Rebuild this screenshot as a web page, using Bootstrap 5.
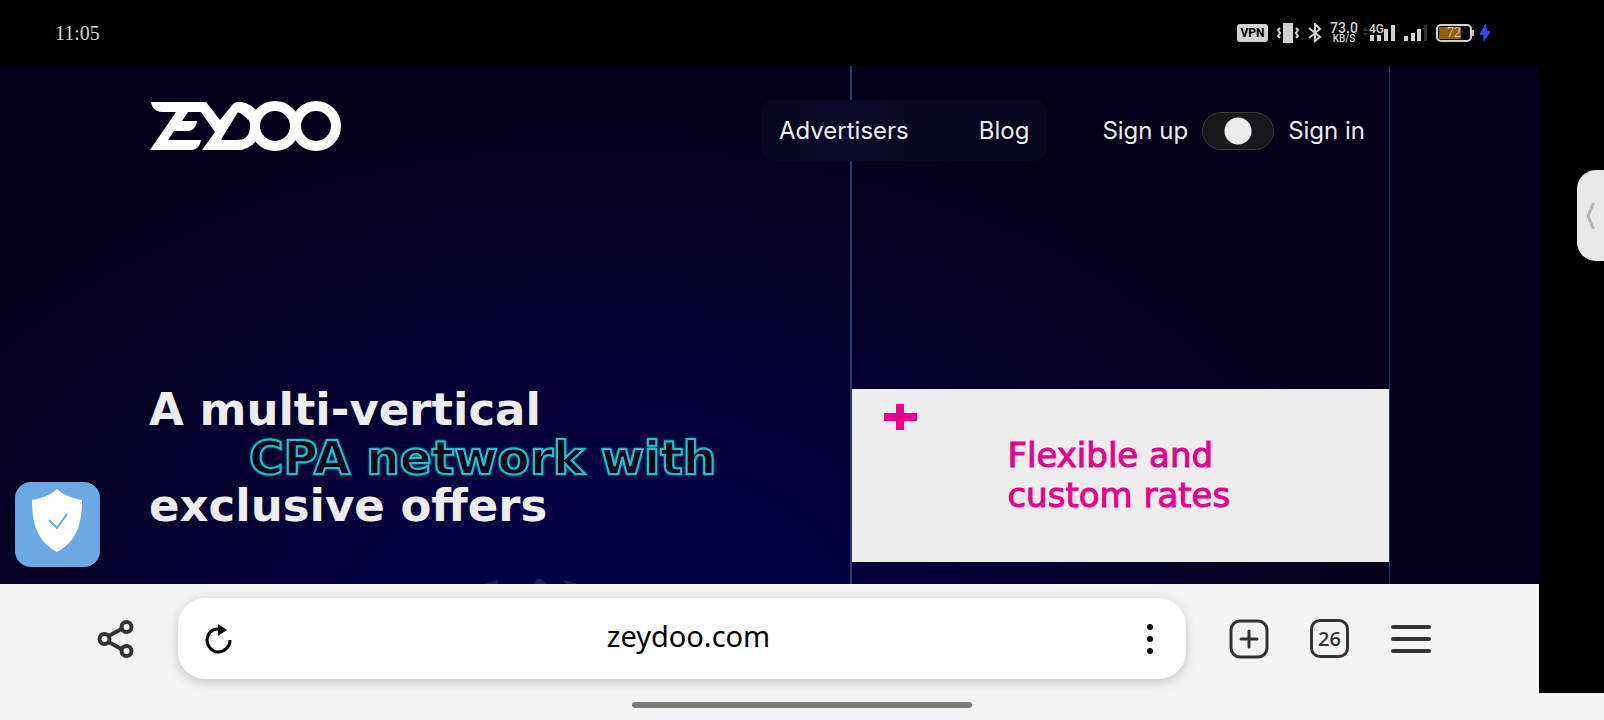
<!DOCTYPE html>
<html lang="en">
<head>
<meta charset="utf-8">
<meta name="viewport" content="width=device-width, initial-scale=1">
<title>zeydoo.com</title>
<link rel="stylesheet" href="https://cdn.jsdelivr.net/npm/bootstrap@5.3.0/dist/css/bootstrap.min.css">
<style>
body{background:#f4f4f4;font-family:Inter,"Open Sans",sans-serif;color:#ededed}
svg{display:block;flex:none}
button{border:0;background:none;padding:0}
.status{height:66px;background:#000;padding:0 114px 0 55px;color:#d2d2d2}
.clock{font:20px "Liberation Serif",serif}
.vpn{background:#d2d2d2;color:#000;font:bold 12px/18px Roboto,sans-serif;width:31px;border-radius:3px;text-align:center}
.rate{font:500 14px/11px Roboto,sans-serif;width:28px;text-align:center}
.rate small{font-size:10px;line-height:9px;display:block}
.cell{position:relative}
.cell span{position:absolute;left:0;top:-1px;font:500 12px/12px Roboto,sans-serif;background:#000}
.batt{width:36px;height:18px;border:2px solid #d2d2d2;border-radius:5px;position:relative;font:14px/14px "Liberation Serif",serif;text-align:center;background:linear-gradient(#8d620c,#8d620c) 1px 1px/22px 12px no-repeat;color:#e5cf9d}
.batt::after{content:"";position:absolute;right:-4px;top:4px;width:2px;height:6px;background:#bbb}
.edge{width:65px;background:#000;position:relative}
.handle{position:absolute;right:0;top:104px;width:27px;height:91px;border-radius:19px 0 0 19px;background:#e8e8e8}
.handle svg{margin-left:8px}
.hero{display:grid;grid-template:118px 1fr/13fr 10fr;padding:0 149px;position:relative;overflow:hidden;
background:radial-gradient(ellipse 820px 540px at 39% 108%,#05004c 0,#05003f 30%,#050028 62%,rgba(4,0,24,0) 100%),#040018}
.rails{grid-area:1/2/3/3;border-left:2px solid #2c3866;border-right:1px solid #2a3560;padding-bottom:22px}
.top{grid-area:1/1/2/3;z-index:1;padding:11px 25px 0 1px;font-size:24px}
.top a{color:#ededed;text-decoration:none;line-height:61px}
.top .logo{padding-bottom:10px}
.pill{background:radial-gradient(ellipse 60px 90px at 91px 30px,#0d0b28,#090620);border-radius:14px;padding:0 18px;gap:70px}
.account{margin-left:55px;gap:14px}
.flip{appearance:none;width:72px;height:38px;border:1px solid #39393e;border-radius:19px;margin:0;background:radial-gradient(circle at 50% 50%,#ededed 13px,#18181b 14px)}
.headline{grid-area:2/1/3/2;margin:0 0 54px;align-self:end;font:700 45px/48px "DejaVu Sans",sans-serif;white-space:nowrap}
.headline em{display:block;font:700 47px/48px "DejaVu Sans",sans-serif;color:#04001a;-webkit-text-stroke:2px #1fc0cf;margin-left:100px;filter:drop-shadow(0 0 1px #1a9fb0)}
.offer{background:#ededed;height:173px;color:#e6008a;position:relative;padding:46px 0 0 155px;font:400 34px/40px "DejaVu Sans",sans-serif;-webkit-text-stroke:1px #e6008a}
.offer svg{position:absolute;left:32px;top:15px}
.guard{position:absolute;left:15px;bottom:17px;width:85px;height:85px;border-radius:16px;background:#6aa9e4;padding:0 17px 9px}
.gear{position:absolute;left:484px;bottom:0}
.tools{height:109px;padding:0 108px 0 97px;color:#333}
.address{height:81px;border-radius:27px;background:#fff;box-shadow:0 3px 12px rgba(0,0,0,.2);margin:0 43px 0 44px;padding:0 33px 0 26px}
.address input{border:0;outline:0;background:none;min-width:0;font:29px "Noto Sans",sans-serif;color:#000;text-align:center;padding:0 2px 6px 0}
.tabs{width:39px;height:39px;border:3px solid #333;border-radius:10px;font:600 20px/32px "Open Sans",sans-serif;color:#333;margin:0 42px 0 41px}
.gesture{height:27px;padding-bottom:3px}
.gesture div{width:340px;height:6px;border-radius:3px;background:#7b7b78}
</style>
</head>
<body class="d-flex flex-column min-vh-100">
<header class="status d-flex align-items-center">
  <time class="clock me-auto">11:05</time>
  <span class="vpn">VPN</span>
  <svg class="ms-2" width="24" height="20" viewBox="0 0 24 20"><path d="M7 0h10v20H7z" fill="#d2d2d2"/><path d="M4 5 2 7l2 3-2 3 2 2M20 5l2 2-2 3 2 3-2 2" fill="none" stroke="#d2d2d2" stroke-width="2"/></svg>
  <svg class="ms-2" width="14" height="20" viewBox="0 0 14 20"><path d="m1 5 11 9-5 4V1l5 5-11 9" fill="none" stroke="#d2d2d2" stroke-width="2"/></svg>
  <span class="rate ms-2">73.0<small>KB/S</small></span>
  <svg class="ms-1" width="7" height="14" viewBox="0 0 7 14"><path d="m1 5 2-4 3 4zM1 7l2 3 3-3z" fill="#333"/></svg>
  <span class="cell"><svg width="27" height="18" viewBox="0 0 27 18"><path d="M1 11h4v6H1zM8 9h4v8H8zM15 5h4v12h-4zM22 1h4v16h-4z" fill="#d2d2d2"/></svg><span>4G</span></span>
  <svg class="ms-2" width="24" height="18" viewBox="0 0 24 18"><path d="M0 12h4v5H0zM7 9h4v8H7zM13 5h4v12h-4z" fill="#d2d2d2"/><path d="M20 1h3v16h-3z" fill="#333"/></svg>
  <span class="batt ms-2">72</span>
  <svg class="ms-2" width="10" height="20" viewBox="1 0 10 20"><path d="M7 0 0 12h4l1 7 7-11H8z" fill="#2f45ee"/></svg>
</header>
<div class="d-flex flex-grow-1">
  <div class="d-flex flex-column flex-grow-1">
    <main class="hero flex-grow-1">
      <nav class="top d-flex align-items-center">
        <a href="#" class="logo me-auto" aria-label="Zeydoo"><svg width="192" height="50" viewBox="0 0 192 50"><g fill="#fff"><path d="M1 1h55l14 18L83 3c2-2 5-2 8-2 7 1 11 4 15 8l-8 10c-3-4-7-7-10-8L72 37c-1 2-1 2 1 2h17l4 9-8 1H52L65 31 51 11H38l-6 9h15c-1 6-4 10-9 10H24l-6 9h33c-1 6-4 10-10 10H0l26-38H12C6 11 2 7 1 1z"/></g><g fill="none" stroke="#fff" stroke-width="10"><circle cx="125" cy="25" r="20"/><circle cx="166" cy="25" r="20"/><path d="M86 6c12 1 19 9 19 19 0 12-7 19-18 19"/></g></svg></a>
        <div class="pill d-flex"><a href="#">Advertisers</a><a href="#">Blog</a></div>
        <div class="account d-flex align-items-center"><a href="#">Sign up</a><input class="flip" type="checkbox" role="switch" aria-label="Sign up or sign in"><a href="#">Sign in</a></div>
      </nav>
      <h1 class="headline">A multi-vertical<em>CPA network with</em>exclusive offers</h1>
      <section class="rails d-flex flex-column justify-content-end">
        <div class="offer"><svg width="34" height="26" viewBox="0 0 34 26"><path d="M12 0h8v9h13v8H20v9h-8v-9H0V9h12z" fill="#eb008b"/></svg>Flexible and<br>custom rates</div>
      </section>
      <svg class="gear" width="100" height="5" viewBox="0 0 100 5"><path d="M0 5 14 1v4zM50 5l3-5h5l4 5zM79 1l15 4H82z" fill="#fff" opacity=".12"/></svg>
      <button class="guard" aria-label="Protection"><svg width="50" height="63" viewBox="0 0 50 63"><path d="M25 0c6 6 15 9 25 11 0 27-7 42-25 52C7 53 0 38 0 11 10 9 19 6 25 0z" fill="#fff"/><path d="m17 31 8 8 10-14" fill="none" stroke="#6aa9e4" stroke-width="2"/></svg></button>
    </main>
    <div class="tools d-flex align-items-center">
      <button aria-label="Share"><svg width="37" height="38" viewBox="0 0 36 38" fill="none" stroke="#333" stroke-width="4"><circle cx="7" cy="19" r="5"/><circle cx="29" cy="7" r="5"/><circle cx="29" cy="31" r="5"/><path d="m11 16 13-7M11 22l13 7"/></svg></button>
      <div class="address d-flex align-items-center flex-grow-1">
        <button aria-label="Reload"><svg width="28" height="30" viewBox="0 0 28 30"><path d="M15 5C8 4 3 10 3 16s5 12 11 12 12-5 12-12" fill="none" stroke="#000" stroke-width="3"/><path d="m14 0 9 6-9 6z"/></svg></button>
        <input class="flex-grow-1" type="text" value="zeydoo.com" aria-label="Address">
        <button aria-label="Page options"><svg width="6" height="30" viewBox="0 0 6 30"><circle cx="3" cy="3" r="3"/><circle cx="3" cy="15" r="3"/><circle cx="3" cy="27" r="3"/></svg></button>
      </div>
      <button aria-label="New tab"><svg width="40" height="40" viewBox="0 0 40 40" fill="none" stroke="#333" stroke-width="3"><rect x="2" y="2" width="36" height="36" rx="9"/><path d="M12 20h16M20 12v16" stroke-linecap="round"/></svg></button>
      <button class="tabs" aria-label="Open tabs">26</button>
      <button aria-label="Menu"><svg width="40" height="28" viewBox="0 0 40 28"><path d="M2 2h36M2 14h36M2 26h36" stroke="#333" stroke-width="4" stroke-linecap="round"/></svg></button>
    </div>
  </div>
  <aside class="edge"><button class="handle" aria-label="Open side panel"><svg width="12" height="28" viewBox="0 0 12 28"><path d="M8 2 3 14l5 12" fill="none" stroke="#b5b5b5" stroke-width="3" stroke-linecap="round"/></svg></button></aside>
</div>
<footer class="gesture d-flex justify-content-center align-items-center"><div></div></footer>
<script src="https://cdn.jsdelivr.net/npm/bootstrap@5.3.0/dist/js/bootstrap.bundle.min.js"></script>
</body>
</html>
